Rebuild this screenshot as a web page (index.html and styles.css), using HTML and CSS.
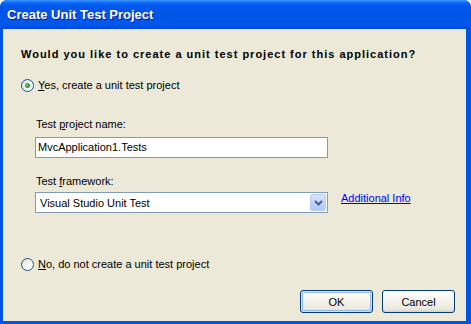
FILE: index.html
```html
<!DOCTYPE html>
<html lang="en">

<head>
    <meta charset="UTF-8">
    <meta name="viewport" content="width=device-width, initial-scale=1.0">
    <title>Create Unit Test Project</title>
    <link rel="stylesheet" href="styles.css">
</head>

<body>
    <div class="window">
        <div class="title-bar">Create Unit Test Project</div>
        <div class="client">
            <div class="question">Would you like to create a unit test project for this application?</div>

            <label class="radio-row first">
                <span class="radio checked"></span>
                <span><u>Y</u>es, create a unit test project</span>
            </label>

            <div class="options">
                <div class="field-label label-name">Test <u>p</u>roject name:</div>
                <div class="textbox">MvcApplication1.Tests</div>

                <div class="field-label label-framework">Test <u>f</u>ramework:</div>
                <div class="select-row">
                    <div class="combo">
                        <span class="combo-text">Visual Studio Unit Test</span>
                        <span class="combo-button">
                            <svg width="9" height="6" viewBox="0 0 9 6">
                                <path d="M1 1 L4.5 4.5 L8 1" fill="none" stroke="#4d6185" stroke-width="2"/>
                            </svg>
                        </span>
                    </div>
                    <a class="info-link" href="#">Additional Info</a>
                </div>
            </div>

            <label class="radio-row second">
                <span class="radio"></span>
                <span><u>N</u>o, do not create a unit test project</span>
            </label>

            <div class="button-container">
                <button class="default">OK</button>
                <button>Cancel</button>
            </div>
        </div>
    </div>
</body>

</html>
```

FILE: styles.css
```css
body {
    margin: 0;
    background-color: #fff;
    font-family: "Liberation Sans", Arial, sans-serif;
    font-size: 11px;
    color: #000;
}

.window {
    width: 471px;
    height: 324px;
    display: flex;
    flex-direction: column;
    box-sizing: border-box;
    background-color: #0054e3;
    border-radius: 7px 7px 0 0;
    overflow: hidden;
}

.title-bar {
    height: 29px;
    flex: none;
    box-sizing: border-box;
    padding: 6px 0 0 7px;
    background: linear-gradient(to bottom, #3d95ff 0, #0a66f6 3px, #0058ee 6px, #0054e6 50%, #0058ec 85%, #0048d8 100%);
    color: #fff;
    font-family: "Liberation Sans", Arial, sans-serif;
    font-weight: bold;
    font-size: 13px;
    line-height: 17px;
    text-shadow: 1px 1px 0 #0a1e8a;
}

.client {
    flex: 1;
    margin: 0 5px 3px 3px;
    background-color: #ece9d8;
    padding: 19px 11px 0 18px;
    display: flex;
    flex-direction: column;
}

.question {
    font-weight: bold;
    line-height: 13px;
    height: 13px;
    letter-spacing: 1px;
    white-space: nowrap;
}

.radio-row {
    display: flex;
    align-items: center;
    height: 13px;
    line-height: 13px;
}

.radio-row.first {
    margin-top: 18px;
}

.radio-row.second {
    margin-top: 45px;
}

.radio {
    width: 13px;
    height: 13px;
    box-sizing: border-box;
    border: 1px solid #1c5180;
    border-radius: 50%;
    background: linear-gradient(135deg, #dcdcd7 0, #fff 70%);
    margin-right: 4px;
    position: relative;
}

.radio.checked::after {
    content: "";
    position: absolute;
    left: 3px;
    top: 3px;
    width: 5px;
    height: 5px;
    border-radius: 50%;
    background: radial-gradient(circle at 40% 40%, #5fd35f 0, #21a121 60%, #1a8a1a 100%);
}

.options {
    margin-left: 14px;
    display: flex;
    flex-direction: column;
}

.field-label {
    line-height: 13px;
    height: 13px;
    padding-left: 1px;
}

.label-name {
    margin-top: 26px;
}

.label-framework {
    margin-top: 17px;
}

.textbox {
    margin-top: 6px;
    width: 293px;
    height: 21px;
    box-sizing: border-box;
    border: 1px solid #7f9db9;
    background-color: #fff;
    padding-left: 2px;
    line-height: 19px;
}

.select-row {
    margin-top: 4px;
    display: flex;
    align-items: flex-start;
}

.combo {
    width: 293px;
    height: 21px;
    box-sizing: border-box;
    border: 1px solid #7f9db9;
    background-color: #fff;
    display: flex;
    align-items: center;
    padding: 1px;
}

.combo-text {
    flex: 1;
    padding-left: 3px;
}

.combo-button {
    width: 16px;
    height: 17px;
    box-sizing: border-box;
    border: 1px solid #b9cdf5;
    border-radius: 2px;
    background: linear-gradient(to bottom, #d8e4fc 0, #c2d4fb 50%, #b4c8f6 100%);
    display: flex;
    align-items: center;
    justify-content: center;
}

.info-link {
    margin-left: 13px;
    color: #0000ff;
    line-height: 13px;
}

.button-container {
    margin-top: 19px;
    display: flex;
    justify-content: flex-end;
    gap: 9px;
}

.button-container button {
    width: 73px;
    height: 23px;
    border: 1px solid #003c74;
    border-radius: 3px;
    background: linear-gradient(to bottom, #fff 0, #f6f5f0 40%, #ebe8dd 85%, #d6d0c5 100%);
    font-family: "Liberation Sans", Arial, sans-serif;
    font-size: 11px;
    color: #000;
    padding: 0;
}

.button-container button.default {
    box-shadow: inset 0 0 0 1px #cee7ff, inset 0 0 0 2px #98b8ea;
}
```
